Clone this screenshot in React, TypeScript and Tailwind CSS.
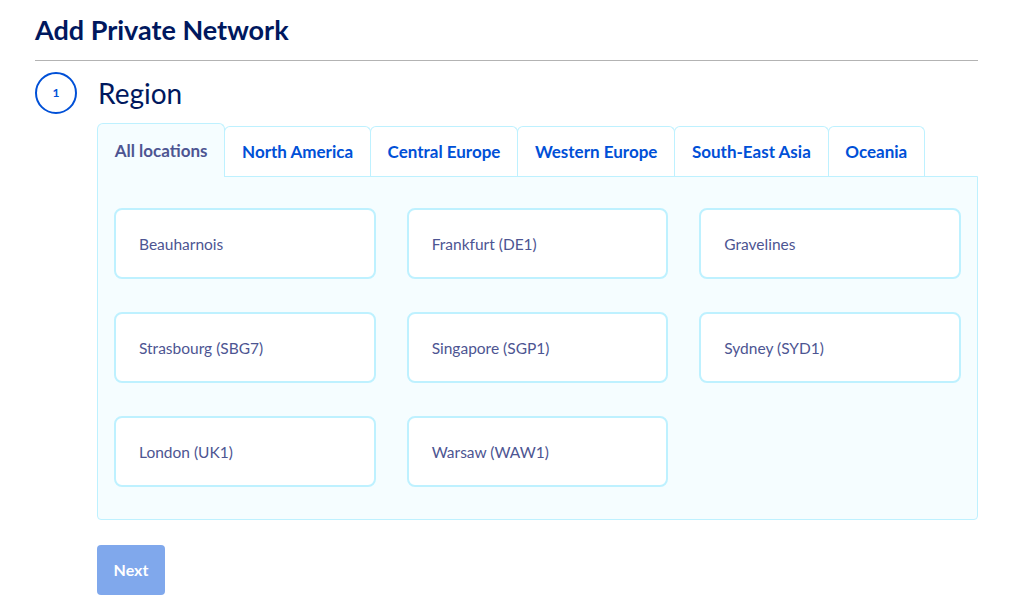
import { useState } from "react";

const tabs = ["All locations", "North America", "Central Europe", "Western Europe", "South-East Asia", "Oceania"];

const regions = [
  "Beauharnois",
  "Frankfurt (DE1)",
  "Gravelines",
  "Strasbourg (SBG7)",
  "Singapore (SGP1)",
  "Sydney (SYD1)",
  "London (UK1)",
  "Warsaw (WAW1)",
];

export default function App() {
  const [selected, setSelected] = useState("All locations");

  return (
    <div className="min-h-screen bg-white px-[35px] pt-[13px] font-['Lato','Liberation_Sans',sans-serif]">
      <h1 className="text-[27px] leading-[34px] font-bold text-[#00185e]">Add Private Network</h1>
      <div className="mt-[13px] w-[943px] h-px bg-[#b3b3b3]" />

      <div className="mt-[11px] flex items-center gap-[21px]">
        <div className="w-[42px] h-[42px] rounded-full border-2 border-[#0050d7] flex items-center justify-center text-[12px] font-bold text-[#0050d7]">
          1
        </div>
        <h2 className="text-[28px] leading-[36px] text-[#00185e]">Region</h2>
      </div>

      <div className="ml-[62px] w-[881px] mt-[9px]">
        {/* Tabs */}
        <div className="flex items-end">
          {tabs.map((tab) => {
            const active = selected === tab;
            return (
              <button
                key={tab}
                onClick={() => setSelected(tab)}
                className={`rounded-t-[6px] border border-b-0 border-[#bef1ff] px-[16.75px] pt-[1px] text-[17px] font-bold ${
                  active
                    ? "relative z-10 -mb-px h-[54px] bg-[#f5fdff] text-[#4d5592]"
                    : "-ml-px h-[50px] bg-white text-[#0050d7]"
                }`}
              >
                {tab}
              </button>
            );
          })}
        </div>

        {/* Panel */}
        <div className="border border-[#bef1ff] rounded-b-[4px] bg-[#f5fdff] px-[16px] pt-[31px] pb-[32px]">
          <div className="grid grid-cols-3 gap-x-[31px] gap-y-[33px]">
            {regions.map((r) => (
              <div
                key={r}
                className="h-[71px] rounded-[8px] border-2 border-[#bef1ff] bg-white px-[23px] pt-[3px] flex items-center text-[15.5px] text-[#4d5592]"
              >
                {r}
              </div>
            ))}
          </div>
        </div>

        <button className="mt-[25px] w-[68px] h-[50px] rounded-[4px] bg-[#80a8ec] text-white text-[16px] font-bold">
          Next
        </button>
      </div>
    </div>
  );
}
